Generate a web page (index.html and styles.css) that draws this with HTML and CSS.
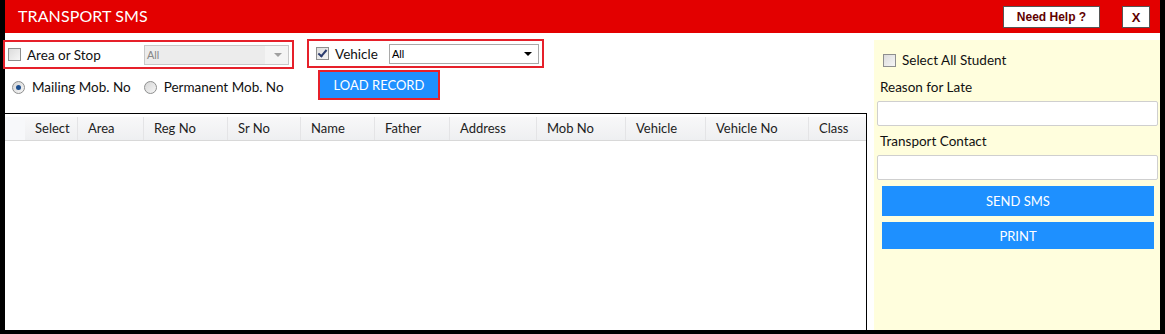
FILE: index.html
```html
<!DOCTYPE html>
<html lang="en">
<head>
    <meta charset="UTF-8">
    <title>Transport SMS</title>
    <link rel="stylesheet" href="styles.css">
</head>
<body>
    <div class="window">
        <!-- title bar -->
        <div class="titlebar">
            <span class="title">TRANSPORT SMS</span>
            <button class="help-btn">Need Help ?</button>
            <button class="close-btn">X</button>
        </div>

        <div class="content">
            <div class="left">
                <div class="filter-row">
                    <div class="filter-box area-box">
                        <span class="check"></span>
                        <span class="label area-label">Area or Stop</span>
                        <div class="select disabled">
                            <span>All</span>
                            <span class="arrow"></span>
                        </div>
                    </div>
                    <div class="filter-box vehicle-box">
                        <span class="check checked"></span>
                        <span class="label vehicle-label">Vehicle</span>
                        <div class="select">
                            <span>All</span>
                            <span class="arrow"></span>
                        </div>
                    </div>
                </div>

                <div class="option-row">
                    <div class="radios">
                        <span class="radio on"></span>
                        <span class="label">Mailing Mob. No</span>
                        <span class="radio"></span>
                        <span class="label">Permanent Mob. No</span>
                    </div>
                    <div class="load-wrap">
                        <button class="load-btn">LOAD RECORD</button>
                    </div>
                </div>

                <!-- grid -->
                <div class="grid">
                    <div class="grid-head">
                        <div class="row-head"></div>
                        <div class="col c-select">Select</div>
                        <div class="col c-area">Area</div>
                        <div class="col c-reg">Reg No</div>
                        <div class="col c-sr">Sr No</div>
                        <div class="col c-name">Name</div>
                        <div class="col c-father">Father</div>
                        <div class="col c-address">Address</div>
                        <div class="col c-mob">Mob No</div>
                        <div class="col c-vehicle">Vehicle</div>
                        <div class="col c-vno">Vehicle No</div>
                        <div class="col c-class">Class</div>
                    </div>
                </div>
            </div>

            <!-- side panel -->
            <div class="side">
                <div class="select-all">
                    <span class="check"></span>
                    <span class="label">Select All Student</span>
                </div>
                <div class="field-label">Reason for Late</div>
                <input type="text" class="field">
                <div class="field-label">Transport Contact</div>
                <input type="text" class="field">
                <button class="side-btn send-btn">SEND SMS</button>
                <button class="side-btn print-btn">PRINT</button>
            </div>
        </div>
    </div>
</body>
</html>
```

FILE: styles.css
```css
body {
    margin: 0;
    padding: 0;
    font-family: 'Lato', 'Noto Sans', sans-serif;
    color: #111;
    background-color: #fff;
}

.window {
    width: 1165px;
    height: 334px;
    box-sizing: border-box;
    border-left: 5px solid #000;
    border-right: 5px solid #000;
    border-bottom: 4px solid #000;
    display: flex;
    flex-direction: column;
    background-color: #fff;
}

/* title bar */
.titlebar {
    height: 33px;
    background-color: #e30000;
    display: flex;
    align-items: center;
    padding: 0 10px 0 13px;
    flex-shrink: 0;
}

.title {
    color: #fff;
    font-size: 16px;
    letter-spacing: 0.1px;
    flex: 1;
    margin-top: -2px;
}

.help-btn, .close-btn {
    height: 22px;
    background-color: #fff;
    border: 1px solid #555;
    font-family: 'Liberation Sans', sans-serif;
    font-weight: bold;
    font-size: 12px;
    color: #600000;
    padding: 0;
    margin-top: 1px;
}

.help-btn {
    width: 97px;
    margin-right: 22px;
}

.close-btn {
    width: 28px;
    font-size: 13px;
}

.content {
    flex: 1;
    display: flex;
    min-height: 0;
}

.left {
    width: 862px;
    display: flex;
    flex-direction: column;
}

.label {
    font-size: 13.5px;
    color: #111;
}

/* checkboxes and radios */
.check {
    width: 11px;
    height: 11px;
    border: 1px solid #8e8f8f;
    background: linear-gradient(135deg, #dcdcdc, #f6f6f6);
    display: inline-block;
    position: relative;
    flex-shrink: 0;
}

.check.checked::after {
    content: '';
    position: absolute;
    left: 3px;
    top: 0px;
    width: 3px;
    height: 7px;
    border-right: 2px solid #2b3c6e;
    border-bottom: 2px solid #2b3c6e;
    transform: rotate(40deg);
}

.radio {
    width: 11px;
    height: 11px;
    border: 1px solid #8e8f8f;
    border-radius: 50%;
    background: linear-gradient(135deg, #d6d6d6, #f6f6f6);
    display: inline-block;
    position: relative;
    flex-shrink: 0;
}

.radio.on::after {
    content: '';
    position: absolute;
    left: 3px;
    top: 3px;
    width: 5px;
    height: 5px;
    border-radius: 50%;
    background-color: #1d4f8f;
}

/* filters */
.filter-row {
    display: flex;
    gap: 13px;
    margin-top: 6px;
    margin-left: -2px;
    align-items: flex-start;
}

.filter-box {
    border: 2px solid #e6202a;
    display: flex;
    align-items: center;
    box-sizing: border-box;
}

.area-box {
    width: 291px;
    height: 29px;
    margin-top: 1px;
    padding-left: 3px;
}

.vehicle-box {
    width: 237px;
    height: 29px;
    padding-left: 7px;
}

.area-label {
    margin-left: 6px;
    width: 117px;
}

.vehicle-label {
    margin-left: 6px;
    width: 54px;
}

.select {
    height: 20px;
    box-sizing: border-box;
    border: 1px solid #a9a9a9;
    background-color: #fff;
    display: flex;
    align-items: center;
    justify-content: space-between;
    padding: 0 6px 0 2px;
    font-family: 'Liberation Sans', sans-serif;
    font-size: 11px;
    color: #000;
}

.area-box .select {
    width: 145px;
}

.vehicle-box .select {
    width: 150px;
}

.select.disabled {
    background: linear-gradient(90deg, #ececec 84%, #f4f4f4 84%);
    border-color: #c8c8c8;
    color: #888;
}

.arrow {
    width: 0;
    height: 0;
    border-left: 4px solid transparent;
    border-right: 4px solid transparent;
    border-top: 4px solid #000;
}

.select.disabled .arrow {
    border-top-color: #a0a0a0;
}

/* options */
.option-row {
    display: flex;
    align-items: center;
    height: 31px;
    margin-top: 0;
}

.radios {
    display: flex;
    align-items: center;
    padding-left: 7px;
    width: 306px;
    margin-top: 5px;
}

.radios .label {
    margin-left: 7px;
    margin-right: 13px;
}

.load-wrap {
    border: 2px solid #e6202a;
    padding: 0;
}

.load-btn {
    width: 118px;
    height: 26px;
    background-color: #1e90ff;
    color: #fff;
    border: none;
    font-family: 'Lato', sans-serif;
    font-size: 13px;
    display: block;
    padding: 0;
}

/* grid */
.grid {
    margin-top: 13px;
    flex: 1;
    border-top: 1px solid #000;
    border-right: 1px solid #000;
}

.grid-head {
    display: flex;
    height: 23px;
    margin-top: 3px;
    border-bottom: 1px solid #d8d8d8;
}

.row-head {
    width: 20px;
    background-color: #f7f8fa;
}

.col {
    background: linear-gradient(#f8f8f9, #eeeff1);
    border-right: 1px solid #e4e4e6;
    font-size: 13px;
    color: #222;
    padding-left: 10px;
    box-sizing: border-box;
    line-height: 23px;
}

.c-select { width: 53px; }
.c-area { width: 66px; }
.c-reg { width: 84px; }
.c-sr { width: 73px; }
.c-name { width: 74px; }
.c-father { width: 75px; }
.c-address { width: 87px; }
.c-mob { width: 89px; }
.c-vehicle { width: 80px; }
.c-vno { width: 103px; }
.c-class { flex: 1; border-right: none; }

/* side panel */
.side {
    flex: 1;
    margin-top: 7px;
    margin-left: 7px;
    background-color: #fffedd;
    padding: 0 2px 0 3px;
    display: flex;
    flex-direction: column;
}

.select-all {
    display: flex;
    align-items: center;
    margin-top: 12px;
    padding-left: 6px;
}

.select-all .label {
    margin-left: 6px;
}

.field-label {
    font-size: 13.5px;
    margin: 11px 0 0 3px;
}

.field + .field-label {
    margin-top: 7px;
}

.field {
    height: 25px;
    box-sizing: border-box;
    border: 1px solid #cfcfcf;
    border-radius: 2px;
    margin-top: 6px;
    background-color: #fff;
}

.side-btn {
    height: 30px;
    margin: 6px 4px 0 5px;
    background-color: #1e90ff;
    color: #fff;
    border: none;
    font-family: 'Lato', sans-serif;
    font-size: 13px;
}

.print-btn {
    height: 27px;
}
```
